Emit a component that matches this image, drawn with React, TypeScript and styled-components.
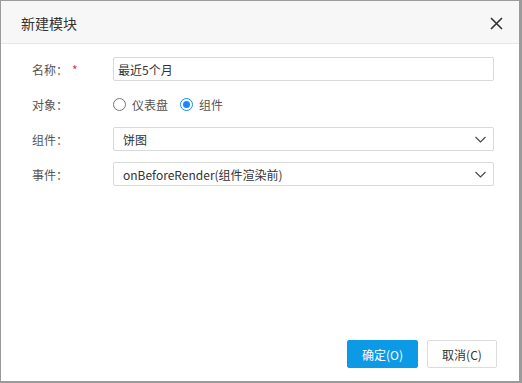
import { createGlobalStyle } from "styled-components";
import styled from "styled-components";

const GlobalStyle = createGlobalStyle`
  html, body {
    margin: 0;
    padding: 0;
    background: #9b9b9b;
  }
  * {
    box-sizing: border-box;
  }
`;

const FONT = `"Noto Sans CJK SC", "Noto Sans", sans-serif`;

function Chevron() {
  return (
    <svg width="11" height="7" viewBox="0 0 11 7">
      <path d="M0.5 1 L5.5 6 L10.5 1" fill="none" stroke="#444" strokeWidth="1.1" />
    </svg>
  );
}

function CloseIcon() {
  return (
    <svg width="13" height="13" viewBox="0 0 13 13">
      <path d="M1 1 L12 12 M12 1 L1 12" fill="none" stroke="#333" strokeWidth="1.6" />
    </svg>
  );
}

export default function App() {
  return (
    <>
      <GlobalStyle />
      <Dialog>
        <Header>
          <Title>新建模块</Title>
          <CloseButton>
            <CloseIcon />
          </CloseButton>
        </Header>
        <Body>
          <Form>
            <Label>
              名称：<Required>*</Required>
            </Label>
            <TextInput defaultValue="最近5个月" />

            <Label>对象：</Label>
            <RadioGroup>
              <RadioItem>
                <RadioCircle $checked={false} />
                仪表盘
              </RadioItem>
              <RadioItem>
                <RadioCircle $checked />
                组件
              </RadioItem>
            </RadioGroup>

            <Label>组件：</Label>
            <Select>
              <span>饼图</span>
              <Chevron />
            </Select>

            <Label>事件：</Label>
            <Select>
              <span>onBeforeRender(组件渲染前)</span>
              <Chevron />
            </Select>
          </Form>
        </Body>
        <Footer>
          <Button $primary>确定(O)</Button>
          <Button>取消(C)</Button>
        </Footer>
      </Dialog>
    </>
  );
}

const Dialog = styled.div`
  margin: 1px 0 0 1px;
  width: 518px;
  height: 380px;
  background: #fff;
  display: flex;
  flex-direction: column;
  font-family: ${FONT};
  color: #333;
`;

const Header = styled.div`
  height: 43px;
  flex: none;
  background: #f7f7f7;
  border-bottom: 1px solid #e6e6e6;
  display: flex;
  align-items: center;
  justify-content: space-between;
  padding: 0 16px 0 20px;
`;

const Title = styled.div`
  font-size: 14px;
  color: #333;
  padding-top: 1px;
`;

const CloseButton = styled.div`
  display: flex;
  align-items: center;
  padding-top: 2px;
`;

const Body = styled.div`
  flex: 1;
  padding: 13px 25px 0 29px;
`;

const Form = styled.div`
  display: grid;
  grid-template-columns: 83px 1fr;
  grid-auto-rows: 24px;
  row-gap: 11px;
  align-items: center;
`;

const Label = styled.div`
  font-size: 12px;
  color: #555;
  display: flex;
  align-items: center;
  padding-left: 2px;
`;

const Required = styled.span`
  color: #e53935;
  margin-left: 4px;
`;

const TextInput = styled.input`
  height: 24px;
  width: 100%;
  border: 1px solid #d9d9d9;
  border-radius: 2px;
  padding: 0 4px;
  font-family: ${FONT};
  font-size: 12px;
  color: #333;
  outline: none;
`;

const RadioGroup = styled.div`
  display: flex;
  align-items: center;
  gap: 12px;
  padding-left: 0;
`;

const RadioItem = styled.label`
  display: flex;
  align-items: center;
  gap: 6px;
  font-size: 12px;
  color: #555;
`;

const RadioCircle = styled.span<{ $checked: boolean }>`
  width: 13px;
  height: 13px;
  border-radius: 50%;
  border: 1px solid ${(p) => (p.$checked ? "#1a86ff" : "#777")};
  display: inline-flex;
  align-items: center;
  justify-content: center;
  &::after {
    content: "";
    width: 7px;
    height: 7px;
    border-radius: 50%;
    background: ${(p) => (p.$checked ? "#1a86ff" : "transparent")};
  }
`;

const Select = styled.div`
  height: 24px;
  border: 1px solid #d9d9d9;
  border-radius: 2px;
  display: flex;
  align-items: center;
  justify-content: space-between;
  padding: 0 7px 0 9px;
  font-size: 12px;
  color: #333;
`;

const Footer = styled.div`
  flex: none;
  display: flex;
  justify-content: flex-end;
  gap: 9px;
  padding: 0 22px 13px 0;
`;

const Button = styled.button<{ $primary?: boolean }>`
  width: ${(p) => (p.$primary ? "71px" : "70px")};
  height: 28px;
  border-radius: 2px;
  font-family: ${FONT};
  font-size: 12px;
  cursor: pointer;
  border: 1px solid ${(p) => (p.$primary ? "#0c9ae6" : "#dcdcdc")};
  background: ${(p) => (p.$primary ? "#0c9ae6" : "#fff")};
  color: ${(p) => (p.$primary ? "#fff" : "#333")};
`;
